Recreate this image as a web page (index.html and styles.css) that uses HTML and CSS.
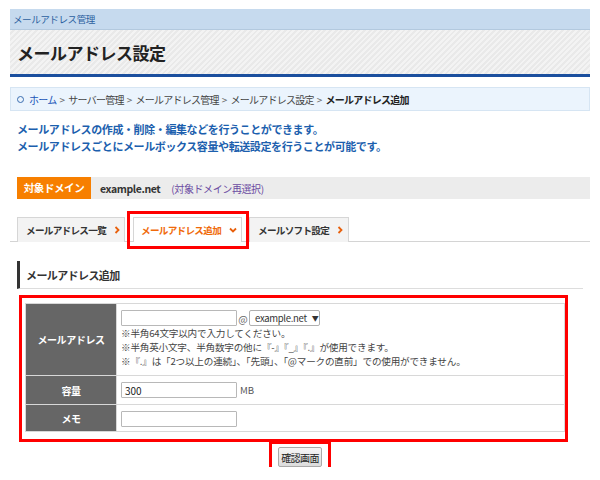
FILE: index.html
```html
<!DOCTYPE html>
<html lang="ja">
<head>
<meta charset="utf-8">
<title>メールアドレス設定</title>
<link rel="stylesheet" href="styles.css">
</head>
<body>
<div class="page">
  <div class="topbar">メールアドレス管理</div>
  <div class="titlebar"><h1>メールアドレス設定</h1></div>

  <div class="crumbs">
    <span class="ring"></span>
    <a class="home">ホーム</a><span class="sep">&gt;</span>サーバー管理<span class="sep">&gt;</span>メールアドレス管理<span class="sep">&gt;</span>メールアドレス設定<span class="sep">&gt;</span><b>メールアドレス追加</b>
  </div>

  <p class="desc">メールアドレスの作成・削除・編集などを行うことができます。<br>メールアドレスごとにメールボックス容量や転送設定を行うことが可能です。</p>

  <div class="domain">
    <span class="domain-label">対象ドメイン</span>
    <span class="domain-name">example.net</span>
    <a class="domain-link">(対象ドメイン再選択)</a>
  </div>

  <div class="tabs">
    <div class="tab t1">メールアドレス一覧<svg class="chev" viewBox="0 0 6 8" width="6" height="8"><polyline points="1.5,1 4.5,4 1.5,7" fill="none" stroke="#e8600c" stroke-width="1.8"/></svg></div>
    <div class="tab t2 active">メールアドレス追加<svg class="chev down" viewBox="0 0 8 6" width="8" height="6"><polyline points="1,1.5 4,4.5 7,1.5" fill="none" stroke="#e8600c" stroke-width="1.8"/></svg>
      <span class="mark mark-tab"></span>
    </div>
    <div class="tab t3">メールソフト設定<svg class="chev" viewBox="0 0 6 8" width="6" height="8"><polyline points="1.5,1 4.5,4 1.5,7" fill="none" stroke="#e8600c" stroke-width="1.8"/></svg></div>
  </div>

  <h2 class="section">メールアドレス追加</h2>

  <div class="formwrap">
    <span class="mark mark-table"></span>
    <div class="form">
      <div class="th row1">メールアドレス</div>
      <div class="td row1">
        <div class="addr"><span class="input w116"></span><span class="at">@</span><span class="select">example.net<span class="tri">▼</span></span></div>
        <div class="note">※半角64文字以内で入力してください。</div>
        <div class="note">※半角英小文字、半角数字の他に『-』『_』『.』が使用できます。</div>
        <div class="note">※『.』は「2つ以上の連続」、「先頭」、「@マークの直前」での使用ができません。</div>
      </div>
      <div class="th row2">容量</div>
      <div class="td row2"><span class="input w116">300</span><span class="unit">MB</span></div>
      <div class="th row3">メモ</div>
      <div class="td row3"><span class="input w116"></span></div>
    </div>
  </div>

  <div class="actions">
    <span class="btnwrap"><button class="btn">確認画面</button><span class="mark mark-btn"></span></span>
  </div>
</div>
</body>
</html>
```

FILE: styles.css
```css
* { box-sizing: border-box; }
html, body { margin: 0; padding: 0; background: #fff; }
body {
  font-family: "Noto Sans CJK JP", "Liberation Sans", sans-serif;
  color: #333;
  font-size: 10px;
}
.page { padding: 9px 10px 0 10px; width: 600px; }

.topbar {
  height: 21px;
  line-height: 20px;
  background: #c6daee;
  border-bottom: 1px solid #b3c9de;
  color: #2b5f9f;
  font-size: 9.6px;
  letter-spacing: -0.5px;
  padding-left: 3px;
}
.titlebar {
  height: 47px;
  background: repeating-linear-gradient(135deg, #f3f3f3 0 2px, #e9e9e9 2px 4px);
  border-bottom: 3px solid #1b4f9e;
  display: flex;
  align-items: center;
  padding-left: 7px;
}
.titlebar h1 {
  margin: 0;
  font-size: 17px;
  letter-spacing: -0.5px;
  font-weight: bold;
  color: #222;
}

.crumbs {
  margin-top: 10px;
  height: 24px;
  background: #ebf4fd;
  border: 1px solid #d6e5f3;
  display: flex;
  align-items: center;
  padding-left: 6px;
  font-size: 10px;
  letter-spacing: -0.75px;
  color: #444;
  white-space: nowrap;
}
.ring {
  width: 7px; height: 7px;
  border: 1.4px solid #3a6db0;
  border-radius: 50%;
  margin-right: 5px;
}
.home { color: #1a55b8; }
.sep { margin: 0 4px 0 3px; color: #666; }
.crumbs b { color: #222; }

.desc {
  margin: 10px 0 0 7px;
  font-size: 11px;
  line-height: 17px;
  letter-spacing: -0.4px;
  color: #1c5fae;
  font-weight: bold;
}

.domain {
  margin: 22px 0 0 7px;
  height: 22px;
  background: #ececec;
  display: flex;
  align-items: center;
}
.domain-label {
  background: #f77f00;
  color: #fff;
  font-weight: bold;
  font-size: 10.5px;
  letter-spacing: -0.4px;
  height: 22px;
  line-height: 22px;
  width: 74px;
  text-align: center;
}
.domain-name {
  margin-left: 9px;
  font-size: 10.5px;
  color: #333;
  font-weight: bold;
  letter-spacing: -0.4px;
}
.domain-link {
  margin-left: 11px;
  color: #6b4ba2;
  font-size: 10px;
  letter-spacing: -0.4px;
}

.tabs {
  margin-top: 18px;
  height: 25px;
  border-bottom: 1px solid #d4d4d4;
  display: flex;
  align-items: flex-end;
  padding-left: 7px;
}
.tab {
  position: relative;
  flex: none;
  height: 25px;
  background: #f3f3f3;
  border: 1px solid #d6d6d6;
  border-bottom: none;
  display: flex;
  align-items: center;
  padding: 0 0 0 8px;
  font-size: 9.6px;
  font-weight: bold;
  letter-spacing: -0.7px;
  color: #333;
  white-space: nowrap;
  margin-bottom: -1px;
}
.t1 { width: 108px; }
.t2 { width: 109px; margin-left: 8px; padding-left: 7px; }
.t3 { width: 100px; margin-left: 7px; }
.tab.active { background: #fff; color: #f06a0a; }
.chev { margin-left: 8px; flex: none; }
.chev.down { margin-left: 8px; }

.mark { position: absolute; border: 3px solid #ff0000; pointer-events: none; }
.mark-tab { left: -7px; top: -7px; width: 122px; height: 38px; }

.section {
  margin: 19px 7px 0 7px;
  height: 28px;
  border-left: 3px solid #333;
  border-bottom: 1px solid #ddd;
  display: flex;
  align-items: center;
  padding-left: 6px;
  font-size: 11px;
  font-weight: bold;
  letter-spacing: -0.6px;
  color: #333;
}

.formwrap {
  position: relative;
  margin: 14px 0 0 15px;
  width: 540px;
}
.mark-table { left: -6px; top: -8px; width: 549px; height: 147px; }

.form {
  display: grid;
  grid-template-columns: 90px 1fr;
  grid-template-rows: 72px 29px 26px;
  border: 1px solid #d8d8d8;
}
.th {
  background: #666;
  color: #fff;
  font-size: 10px;
  font-weight: bold;
  letter-spacing: -0.4px;
  display: flex;
  align-items: center;
  justify-content: center;
  border-bottom: 1px solid #d8d8d8;
}
.td {
  border-left: 1px solid #d8d8d8;
  border-bottom: 1px solid #d8d8d8;
  padding: 6px 4px 0 4px;
}
.th.row3, .td.row3 { border-bottom: none; }

.addr { display: flex; align-items: center; height: 16px; }
.input {
  display: inline-flex;
  align-items: center;
  height: 16px;
  border: 1px solid #b8b8b8;
  border-radius: 1px;
  background: #fff;
  font-size: 10px;
  padding-left: 3px;
  color: #222;
  vertical-align: top;
}
.w116 { width: 116px; }
.at { width: 12px; text-align: center; color: #666; font-size: 10px; }
.select {
  display: inline-flex;
  align-items: center;
  height: 16px;
  width: 71px;
  border: 1px solid #b0b0b0;
  border-radius: 2px;
  padding-left: 5px;
  font-size: 9.5px;
  color: #333;
  letter-spacing: -0.3px;
  white-space: nowrap;
}
.tri { font-size: 7px; margin-left: 5px; }
.note {
  font-size: 9.6px;
  line-height: 14px;
  letter-spacing: -0.2px;
  color: #444;
  white-space: nowrap;
}
.unit { font-size: 9.6px; color: #555; margin-left: 3px; line-height: 16px; vertical-align: top; }

.actions {
  margin-top: 15px;
  display: flex;
  justify-content: center;
}
.btnwrap { position: relative; display: inline-block; }
.btn {
  display: block;
  width: 44px;
  height: 20px;
  padding: 0;
  font-family: "Noto Sans CJK JP", sans-serif;
  font-size: 10px;
  letter-spacing: -0.6px;
  color: #222;
  border: 1px solid #a9a9a9;
  border-radius: 2px;
  background: linear-gradient(#f6f6f6, #dcdcdc);
}
.mark-btn { left: -9px; top: -6px; width: 62px; height: 33px; }
```
